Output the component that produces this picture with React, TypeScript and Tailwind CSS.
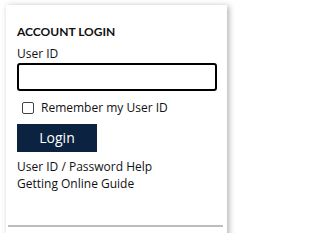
export default function App() {
  return (
    <div className="w-[235px] h-[233px] overflow-hidden bg-white pt-[5px] pl-[6px]">
      <div
        className="w-[221px] h-[260px] bg-white shadow-[2px_1px_6px_rgba(0,0,0,0.3)] pl-[11px] pr-[10px] pt-[19px]"
        style={{ fontFamily: '"Open Sans", "Noto Sans", sans-serif' }}
      >
        {/* Login form */}
        <h2
          className="text-[12px] font-bold leading-[16px] text-[#111]"
          style={{ fontFamily: 'Lato, "Open Sans", sans-serif' }}
        >
          ACCOUNT LOGIN
        </h2>
        <label className="block mt-[5px] text-[12px] leading-[17px] text-[#111]">User ID</label>
        <input
          type="text"
          className="block mt-[1px] w-[200px] h-[28px] border-2 border-black rounded-[3px] px-2 text-[13px] outline-none"
        />
        <label className="flex items-center mt-[8px] ml-[5px] text-[12px] leading-[17px] text-[#111]">
          <span className="w-[12px] h-[12px] border border-[#444] rounded-[2px] bg-white mr-[7px]"></span>
          Remember my User ID
        </label>
        <button className="block mt-[8px] w-[80px] h-[28px] bg-[#0b2240] text-white text-[14px] leading-[20px]">
          Login
        </button>
        <div className="mt-[6px] text-[12px] leading-[17px] text-[#111]">
          <a className="block">User ID / Password Help</a>
          <a className="block">Getting Online Guide</a>
        </div>
        <div className="mt-[33px] -ml-[9px] w-[215px] border-t-2 border-[#bdbdbd]"></div>
      </div>
    </div>
  )
}
